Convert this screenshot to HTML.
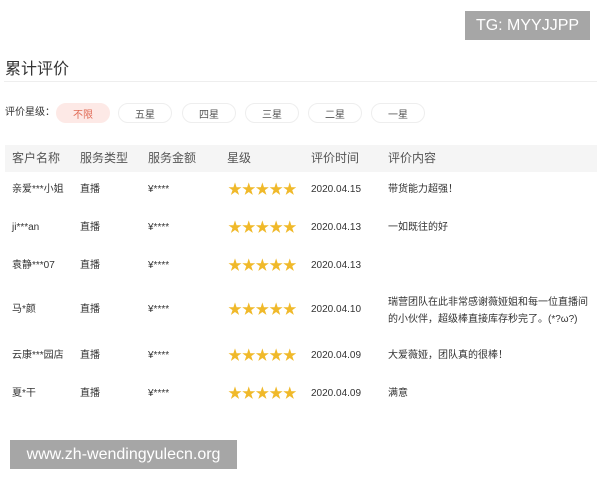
<!DOCTYPE html>
<html><head><meta charset="utf-8"><style>
body{margin:0;width:600px;height:480px;background:#fff;position:relative;overflow:hidden;font-family:"Liberation Sans","Noto Sans CJK SC",sans-serif;color:#333}
.a{position:absolute;white-space:nowrap}
.tg{left:465px;top:11px;width:125px;height:29px;background:#a6a6a6;color:#fff;font-size:16px;line-height:29px;text-align:center}
.wm{left:10px;top:440px;width:227px;height:29px;background:#a6a6a6;color:#fff;font-size:16px;line-height:29px;text-align:center}
.pill{position:absolute;top:103px;height:20px;width:54px;border:1px solid #eee;border-radius:10px;box-sizing:border-box;font-size:10px;display:flex;align-items:center;justify-content:center;color:#555;padding-top:1px}
.hd{position:absolute;left:5px;top:145px;width:592px;height:27px;background:#f5f5f5}
.h{font-size:12px;color:#555;top:151px;line-height:14px}
.c{font-size:10px;line-height:14px}
.st{color:#f0b92a;font-size:14px;line-height:14px}
.st span{display:inline-block;width:13.7px;text-align:center}
</style></head><body>
<div class="a tg">TG: MYYJJPP</div>
<div class="a" style="left:5px;top:55px;font-size:16px;color:#333">累计评价</div>
<div class="a" style="left:4px;top:81px;width:593px;height:1px;background:#eee"></div>
<div class="a" style="left:5px;top:106px;font-size:10px;line-height:14px">评价星级：</div>
<div class="pill" style="left:56px;background:#fde9e6;border-color:#fde9e6;color:#e06a55">不限</div>
<div class="pill" style="left:118px">五星</div>
<div class="pill" style="left:182px">四星</div>
<div class="pill" style="left:245px">三星</div>
<div class="pill" style="left:308px">二星</div>
<div class="pill" style="left:371px">一星</div>
<div class="hd"></div>
<div class="a h" style="left:12px">客户名称</div>
<div class="a h" style="left:80px">服务类型</div>
<div class="a h" style="left:148px">服务金额</div>
<div class="a h" style="left:227px">星级</div>
<div class="a h" style="left:311px">评价时间</div>
<div class="a h" style="left:388px">评价内容</div>

<div class="a c" style="left:12px;top:183px">亲爱***小姐</div><div class="a c" style="left:80px;top:183px">直播</div><div class="a c" style="left:148px;top:183px">¥****</div><div class="a st" style="left:228px;top:182px"><span>★</span><span>★</span><span>★</span><span>★</span><span>★</span></div><div class="a c" style="left:311px;top:183px">2020.04.15</div><div class="a c" style="left:388px;top:183px">带货能力超强！</div>

<div class="a c" style="left:12px;top:221px">ji***an</div><div class="a c" style="left:80px;top:221px">直播</div><div class="a c" style="left:148px;top:221px">¥****</div><div class="a st" style="left:228px;top:220px"><span>★</span><span>★</span><span>★</span><span>★</span><span>★</span></div><div class="a c" style="left:311px;top:221px">2020.04.13</div><div class="a c" style="left:388px;top:221px">一如既往的好</div>

<div class="a c" style="left:12px;top:259px">袁静***07</div><div class="a c" style="left:80px;top:259px">直播</div><div class="a c" style="left:148px;top:259px">¥****</div><div class="a st" style="left:228px;top:258px"><span>★</span><span>★</span><span>★</span><span>★</span><span>★</span></div><div class="a c" style="left:311px;top:259px">2020.04.13</div>

<div class="a c" style="left:12px;top:303px">马*颜</div><div class="a c" style="left:80px;top:303px">直播</div><div class="a c" style="left:148px;top:303px">¥****</div><div class="a st" style="left:228px;top:302px"><span>★</span><span>★</span><span>★</span><span>★</span><span>★</span></div><div class="a c" style="left:311px;top:303px">2020.04.10</div><div class="a c" style="left:388px;top:294px;line-height:17px">瑞营团队在此非常感谢薇娅姐和每一位直播间<br>的小伙伴，超级棒直接库存秒完了。(*?ω?)</div>

<div class="a c" style="left:12px;top:349px">云康***园店</div><div class="a c" style="left:80px;top:349px">直播</div><div class="a c" style="left:148px;top:349px">¥****</div><div class="a st" style="left:228px;top:348px"><span>★</span><span>★</span><span>★</span><span>★</span><span>★</span></div><div class="a c" style="left:311px;top:349px">2020.04.09</div><div class="a c" style="left:388px;top:349px">大爱薇娅，团队真的很棒！</div>

<div class="a c" style="left:12px;top:387px">夏*干</div><div class="a c" style="left:80px;top:387px">直播</div><div class="a c" style="left:148px;top:387px">¥****</div><div class="a st" style="left:228px;top:386px"><span>★</span><span>★</span><span>★</span><span>★</span><span>★</span></div><div class="a c" style="left:311px;top:387px">2020.04.09</div><div class="a c" style="left:388px;top:387px">满意</div>

<div class="a wm">www.zh-wendingyulecn.org</div>
</body></html>
